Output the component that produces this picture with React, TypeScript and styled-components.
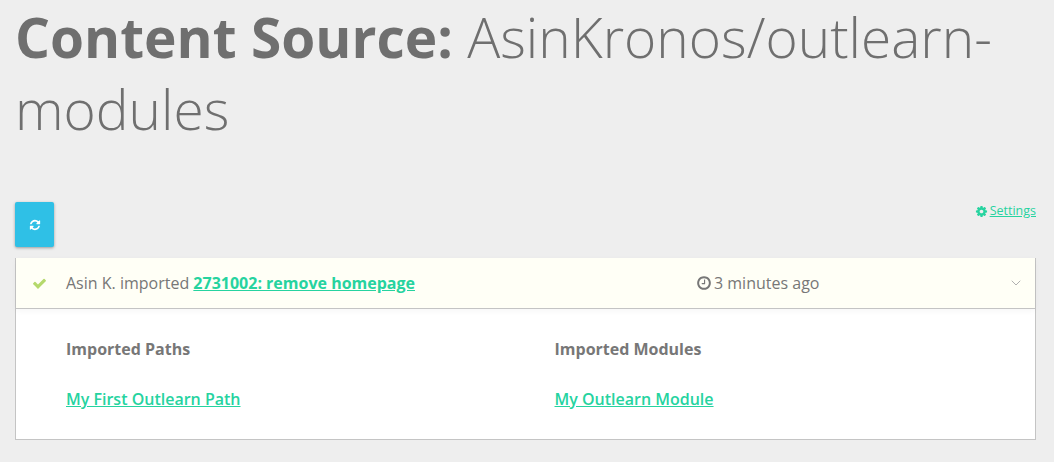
import styled, { createGlobalStyle } from "styled-components"
import { FiChevronDown } from "react-icons/fi"

const GlobalStyle = createGlobalStyle`
  html, body {
    margin: 0;
    padding: 0;
    background: #eeeeee;
    font-family: "Open Sans", sans-serif;
    color: #777777;
    overflow: hidden;
  }
`

const RefreshIcon = ({ size }: { size: number }) => (
  <svg width={size} height={size} viewBox="0 0 1792 1792" fill="currentColor">
    <path d="M1639 1056q0 5-1 7-64 268-268 434.5t-478 166.5q-146 0-282.5-55t-243.5-157l-129 129q-19 19-45 19t-45-19-19-45v-448q0-26 19-45t45-19h448q26 0 45 19t19 45-19 45l-137 137q71 66 161 102t187 36q134 0 250-65t186-179q11-17 53-117 8-23 30-23h192q13 0 22.5 9.5t9.5 22.5zm25-800v448q0 26-19 45t-45 19h-448q-26 0-45-19t-19-45 19-45l138-138q-148-137-349-137-134 0-250 65t-186 179q-11 17-53 117-8 23-30 23h-199q-13 0-22.5-9.5t-9.5-22.5v-7q65-268 270-434.5t480-166.5q146 0 284 55.5t245 156.5l130-129q19-19 45-19t45 19 19 45z" />
  </svg>
)

const CheckIcon = ({ size }: { size: number }) => (
  <svg width={size} height={size} viewBox="0 0 1792 1792" fill="currentColor">
    <path d="M1671 566q0 40-28 68l-724 724-136 136q-28 28-68 28t-68-28l-136-136-362-362q-28-28-28-68t28-68l136-136q28-28 68-28t68 28l294 295 656-657q28-28 68-28t68 28l136 136q28 28 28 68z" />
  </svg>
)

const CogIcon = ({ size }: { size: number }) => (
  <svg width={size} height={size} viewBox="0 0 1792 1792" fill="currentColor">
    <path d="M1152 896q0-106-75-181t-181-75-181 75-75 181 75 181 181 75 181-75 75-181zm512-109v222q0 12-8 23t-20 13l-185 28q-19 54-39 91 35 50 107 138 10 12 10 25t-9 23q-27 37-99 108t-94 71q-12 0-26-9l-138-108q-44 23-91 38-16 136-29 186-7 28-36 28h-222q-14 0-24.5-8.5t-11.5-21.5l-28-184q-49-16-90-37l-141 107q-10 9-25 9-14 0-25-11-126-114-165-168-7-10-7-23 0-12 8-23 15-21 51-66.5t54-70.5q-27-50-41-99l-183-27q-13-2-21-12.5t-8-23.5v-222q0-12 8-23t19-13l186-28q14-46 39-92-40-57-107-138-10-12-10-24 0-10 9-23 26-36 98.5-107.5t94.5-71.5q13 0 26 10l138 107q44-23 91-38 16-136 29-186 7-28 36-28h222q14 0 24.5 8.5t11.5 21.5l28 184q49 16 90 37l142-107q9-9 24-9 13 0 25 10 129 119 165 170 7 8 7 22 0 12-8 23-15 21-51 66.5t-54 70.5q26 50 41 98l183 28q13 2 21 12.5t8 23.5z" />
  </svg>
)

const ClockIcon = ({ size }: { size: number }) => (
  <svg width={size} height={size} viewBox="0 0 1792 1792" fill="currentColor">
    <path d="M1024 544v448q0 14-9 23t-23 9h-320q-14 0-23-9t-9-23v-64q0-14 9-23t23-9h224v-352q0-14 9-23t23-9h64q14 0 23 9t9 23zm416 352q0-148-73-273t-198-198-273-73-273 73-198 198-73 273 73 273 198 198 273 73 273-73 198-198 73-273zm224 0q0 209-103 385.5t-279.5 279.5-385.5 103-385.5-103-279.5-279.5-103-385.5 103-385.5 279.5-279.5 385.5-103 385.5 103 279.5 279.5 103 385.5z" />
  </svg>
)

export default function App() {
  return (
    <Page>
      <GlobalStyle />
      <Title><strong>Content Source:</strong> AsinKronos/outlearn-modules</Title>
      <Toolbar>
        <SyncButton><RefreshIcon size={12} /></SyncButton>
        <SettingsLink><CogIcon size={13} /><a>Settings</a></SettingsLink>
      </Toolbar>
      <Panel>
        <ImportRow>
          <CheckMark><CheckIcon size={15} /></CheckMark>
          <Message>Asin K. imported <BoldLink>2731002: remove homepage</BoldLink></Message>
          <Time><ClockIcon size={16} /> 3 minutes ago</Time>
          <Chevron><FiChevronDown size={16} strokeWidth={1.5} /></Chevron>
        </ImportRow>
        <Details>
          <Column>
            <Heading>Imported Paths</Heading>
            <ItemLink>My First Outlearn Path</ItemLink>
          </Column>
          <Column>
            <Heading>Imported Modules</Heading>
            <ItemLink>My Outlearn Module</ItemLink>
          </Column>
        </Details>
      </Panel>
    </Page>
  )
}

const Page = styled.div`
  padding: 0 18px 0 15px;
  height: 462px;
  box-sizing: border-box;
`
const Title = styled.h1`
  margin: 0;
  padding: 1px 0 0 0;
  height: 199px;
  box-sizing: border-box;
  font-size: 55px;
  line-height: 72px;
  font-weight: 300;
  color: #6f6f6f;
  strong { font-weight: 700; }
`
const Toolbar = styled.div`
  display: flex;
  justify-content: space-between;
  align-items: flex-start;
  height: 59px;
`
const SyncButton = styled.button`
  width: 39px;
  height: 45px;
  margin-top: 3px;
  border: 0;
  border-radius: 2px;
  padding: 0;
  background: #2fc0e6;
  color: #fff;
  box-shadow: 0 1px 3px rgba(0, 0, 0, 0.35);
  display: flex;
  align-items: center;
  justify-content: center;
`
const SettingsLink = styled.div`
  display: flex;
  align-items: center;
  gap: 2px;
  margin-top: 4px;
  font-size: 12.5px;
  line-height: 16px;
  color: #26d39f;
  a { text-decoration: underline; }
`
const Panel = styled.div`
  border: 1px solid #c4c4c4;
  border-top: 0;
  background: #fff;
`
const ImportRow = styled.div`
  display: flex;
  align-items: center;
  height: 50px;
  background: #fffff6;
  border-bottom: 1px solid #c4c4c4;
  box-shadow: 0 2px 6px rgba(0, 0, 0, 0.04);
  font-size: 16px;
`
const CheckMark = styled.span`
  width: 46px;
  padding-right: 4px;
  display: flex;
  justify-content: center;
  color: #b5d96c;
`
const Message = styled.div`
  width: 630px;
`
const BoldLink = styled.a`
  color: #26d39f;
  font-weight: 700;
  text-decoration: underline;
`
const Time = styled.div`
  flex: 1;
  display: flex;
  align-items: center;
  gap: 2px;
`
const Chevron = styled.span`
  width: 27px;
  color: #b0b0b0;
  display: flex;
`
const Details = styled.div`
  display: grid;
  grid-template-columns: 488.5px 1fr;
  padding: 29px 50px 29px;
`
const Column = styled.div`
  display: flex;
  flex-direction: column;
  gap: 28px;
`
const Heading = styled.div`
  font-size: 16px;
  line-height: 22px;
  font-weight: 700;
  color: #777777;
`
const ItemLink = styled.a`
  font-size: 16px;
  line-height: 22px;
  font-weight: 600;
  color: #26d39f;
  text-decoration: underline;
`
